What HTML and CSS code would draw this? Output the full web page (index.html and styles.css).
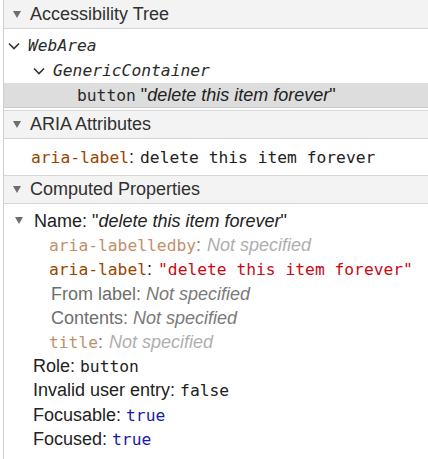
FILE: index.html
```html
<!DOCTYPE html>
<html>
<head>
<meta charset="utf-8">
<link rel="stylesheet" href="styles.css">
</head>
<body>
<div class="panel">
  <section class="section">
    <div class="header first"><span class="tri"></span>Accessibility Tree</div>
    <div class="tree">
      <div class="node lvl0"><svg class="chev" width="12" height="8" viewBox="0 0 12 8"><polyline points="1,1.5 6,6.5 11,1.5" fill="none" stroke="#333" stroke-width="1.6"/></svg><span class="mono it">WebArea</span></div>
      <div class="node lvl1"><svg class="chev" width="12" height="8" viewBox="0 0 12 8"><polyline points="1,1.5 6,6.5 11,1.5" fill="none" stroke="#333" stroke-width="1.6"/></svg><span class="mono it">GenericContainer</span></div>
      <div class="node lvl2 selected"><span class="mono">button</span> "<span class="it">delete this item forever</span>"</div>
    </div>
  </section>
  <section class="section">
    <div class="header"><span class="tri"></span>ARIA Attributes</div>
    <div class="aria"><span class="mono attr">aria-label</span><span class="colon">:</span><span class="mono">delete this item forever</span></div>
  </section>
  <section class="section">
    <div class="header"><span class="tri"></span>Computed Properties</div>
    <div class="props">
      <div class="prow top"><span class="tri2"></span>Name: "<span class="it">delete this item forever</span>"</div>
      <div class="prow sub dim"><span class="mono attr">aria-labelledby</span><span class="colon">:</span><span class="it ns">Not specified</span></div>
      <div class="prow sub"><span class="mono attr">aria-label</span><span class="colon">:</span><span class="mono str">"delete this item forever"</span></div>
      <div class="prow sub2 grey">From label: <span class="it ns">Not specified</span></div>
      <div class="prow sub2 grey">Contents: <span class="it ns">Not specified</span></div>
      <div class="prow sub dim"><span class="mono attr">title</span><span class="colon">:</span><span class="it ns">Not specified</span></div>
      <div class="prow plain">Role: <span class="mono">button</span></div>
      <div class="prow plain">Invalid user entry: <span class="mono">false</span></div>
      <div class="prow plain">Focusable: <span class="mono kw">true</span></div>
      <div class="prow plain">Focused: <span class="mono kw">true</span></div>
    </div>
  </section>
</div>
</body>
</html>
```
FILE: styles.css
```css
html, body {
  margin: 0;
  padding: 0;
  background: #fff;
}
body {
  font-family: "Liberation Sans", Arial, sans-serif;
  font-size: 18px;
  color: #222;
}
.panel {
  margin-left: 3px;
  border-left: 1px solid #cfcfcf;
  min-height: 459px;
}
.mono {
  font-family: "DejaVu Sans Mono", monospace;
  font-size: 16.3px;
}
.it { font-style: italic; }
.header {
  height: 29px;
  box-sizing: border-box;
  background: #f3f3f3;
  border-top: 1px solid #d6d6d6;
  border-bottom: 1px solid #d6d6d6;
  display: flex;
  align-items: center;
  color: #303030;
  font-size: 18px;
}
.header.first {
  border-top: none;
}
.tri {
  width: 0;
  height: 0;
  border-left: 4px solid transparent;
  border-right: 4px solid transparent;
  border-top: 7px solid #6e6e6e;
  margin-left: 9px;
  margin-right: 9px;
}
.tree {
  padding-top: 4px;
  padding-bottom: 2px;
}
.node {
  height: 25px;
  display: flex;
  align-items: center;
  white-space: pre;
}
.node .mono { color: #2a2a2a; }
.chev { margin-right: 8px; }
.lvl0 { padding-left: 4px; }
.lvl1 { padding-left: 29px; }
.lvl2 { padding-left: 73px; }
.selected {
  display: block;
  line-height: 24px;
  background: #dddddd;
  border-bottom: 1px solid #cccccc;
  box-sizing: border-box;
  height: 25px;
}
.aria {
  height: 36px;
  line-height: 36px;
  padding-left: 27px;
  white-space: nowrap;
}
.attr { color: #994500; }
.colon { margin-right: 6px; color: #222; }
.props {
  padding-top: 5px;
}
.prow {
  height: 24.2px;
  line-height: 24.2px;
  white-space: nowrap;
}
.top { padding-left: 11px; }
.tri2 {
  display: inline-block;
  vertical-align: middle;
  width: 0;
  height: 0;
  border-left: 4px solid transparent;
  border-right: 4px solid transparent;
  border-top: 7px solid #6e6e6e;
  margin-right: 11px;
  margin-top: -3px;
}
.sub { padding-left: 45px; }
.sub2 { padding-left: 47px; }
.plain { padding-left: 29px; }
.dim { opacity: 0.6; }
.ns { color: #7a7a7a; }
.grey { color: #6e6e6e; }
.str { color: #c80a14; }
.kw { color: #1a1aa6; }
```
